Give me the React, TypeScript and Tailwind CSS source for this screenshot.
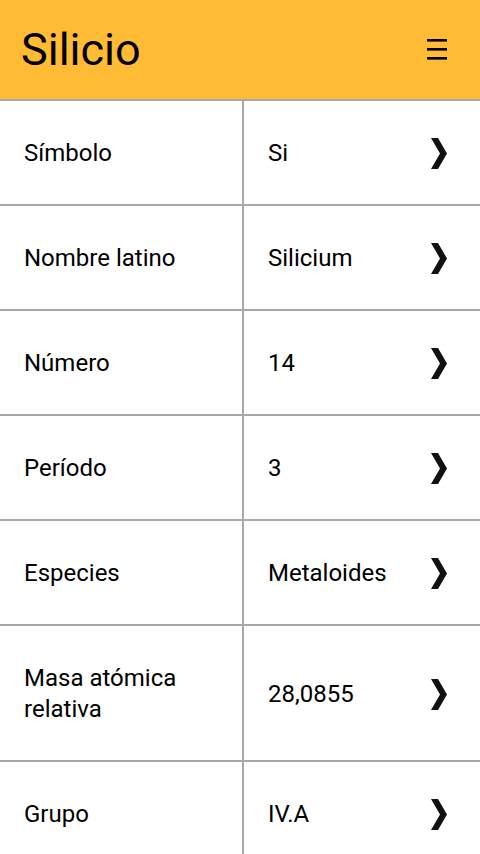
const rows = [
  { label: "Símbolo", value: "Si" },
  { label: "Nombre latino", value: "Silicium" },
  { label: "Número", value: "14" },
  { label: "Período", value: "3" },
  { label: "Especies", value: "Metaloides" },
  { label: "Masa atómica relativa", value: "28,0855" },
  { label: "Grupo", value: "IV.A" },
];

function Chevron() {
  return (
    <svg width="18" height="33" viewBox="0 0 18 33" className="shrink-0">
      <polygon points="1,1 8,1 17,16.5 8,32 1,32 10,16.5" fill="#111" />
    </svg>
  );
}

function MenuIcon() {
  return (
    <svg width="20" height="21" viewBox="0 0 20 21">
      <rect x="0" y="0" width="20" height="2.6" fill="#000" />
      <rect x="0" y="9" width="20" height="2.6" fill="#000" />
      <rect x="0" y="18" width="20" height="2.6" fill="#000" />
    </svg>
  );
}

export default function App() {
  return (
    <div
      className="w-[480px] h-[854px] overflow-hidden bg-white text-black"
      style={{ fontFamily: "Roboto, 'Noto Sans', sans-serif" }}
    >
      {/* Header */}
      <div className="h-[101px] bg-[#ffbb33] border-b-2 border-[#a8a8a8] flex items-center justify-between pl-[21px] pr-[33px]">
        <h1 className="text-[45px] leading-none font-normal">Silicio</h1>
        <MenuIcon />
      </div>

      {/* Property rows */}
      <div>
        {rows.map((row) => (
          <div key={row.label} className="flex border-b-2 border-[#a8a8a8]">
            <div className="w-[244px] shrink-0 border-r-2 border-[#a8a8a8] pl-[24px] pr-3 pt-[37px] pb-[35px] text-[24px] leading-[31px]">
              {row.label}
            </div>
            <div className="flex-1 flex items-center justify-between pl-[24px] pr-[32px] pt-[2px] text-[24px] leading-[31px]">
              <span>{row.value}</span>
              <Chevron />
            </div>
          </div>
        ))}
      </div>
    </div>
  );
}
